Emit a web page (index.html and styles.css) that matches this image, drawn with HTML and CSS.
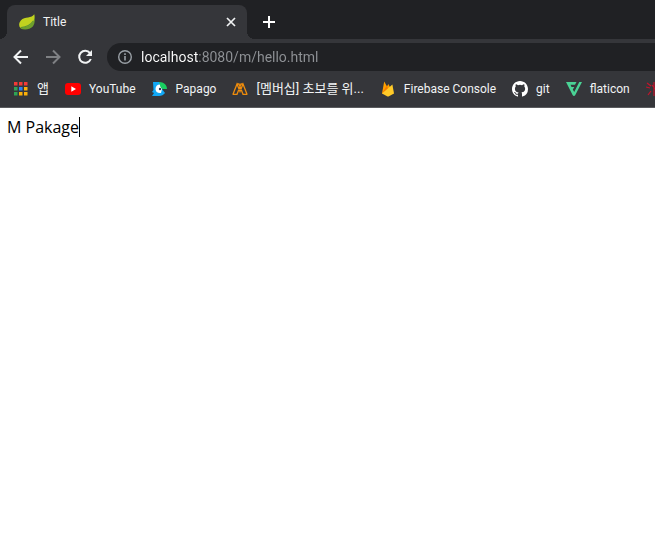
FILE: index.html
```html
<!DOCTYPE html>
<html lang="ko">
<head>
  <meta charset="utf-8">
  <title>Title</title>
  <link rel="stylesheet" href="styles.css">
</head>
<body>
  <header class="browser">
    <div class="tab-strip">
      <div class="tab">
        <svg class="icon" viewBox="0 0 16 16">
          <path fill="#6f9f2c" d="M15.2 0.5C16 5 16.2 9.5 13.8 12.5C11 15.8 5.500 16 1.500 14.800C4 10 10 10 15.200 0.500Z"/>
          <path fill="#c1d21f" d="M15.200 0.300C13 4.500 5.500 2.500 2 6.200C-0.500 9-0.200 12.200 1.200 13.800C6 13.500 11.500 12 14.200 7.500C15.500 5.200 15.700 2.500 15.200 0.300Z"/>
          <path fill="none" stroke="#5f9532" stroke-width="1.100" d="M2 13.600C7 13 11.500 11.200 14.200 7"/>
        </svg>
        <span class="tab-title">Title</span>
        <button class="tab-close" aria-label="Close tab">
          <svg viewBox="0 0 10 10" width="10" height="10"><path d="M1 1L9 9M9 1L1 9" stroke="#f1f3f4" stroke-width="1.700"/></svg>
        </button>
      </div>
      <button class="new-tab" aria-label="New tab">
        <svg viewBox="0 0 12 12" width="12" height="12"><path d="M6 0V12M0 6H12" stroke="#fff" stroke-width="2"/></svg>
      </button>
    </div>

    <div class="toolbar">
      <button class="nav" aria-label="Back">
        <svg viewBox="0 0 16 16"><path d="M15 8H2M8 1.500L1.500 8L8 14.500" fill="none" stroke="#f1f3f4" stroke-width="2"/></svg>
      </button>
      <button class="nav" aria-label="Forward">
        <svg viewBox="0 0 16 16"><path d="M1 8H14M8 1.500L14.500 8L8 14.500" fill="none" stroke="#7f8184" stroke-width="2"/></svg>
      </button>
      <button class="nav" aria-label="Reload">
        <svg viewBox="0 0 16 16"><path d="M13 4.200A6 6 0 1 0 13.800 10" fill="none" stroke="#f1f3f4" stroke-width="2"/><path d="M15 1V7H9Z" fill="#f1f3f4"/></svg>
      </button>
      <label class="address">
        <svg viewBox="0 0 16 16" width="16" height="16"><circle cx="8" cy="8" r="6.300" fill="none" stroke="#9aa0a6" stroke-width="1.400"/><path d="M8 7V11.500M8 4.300V5.900" stroke="#9aa0a6" stroke-width="1.600"/></svg>
        <input class="url" type="text" aria-label="Address" value="localhost:8080/m/hello.html" spellcheck="false">
      </label>
    </div>

    <nav class="bookmarks">
      <a class="bookmark hangul" href="#">
        <svg class="icon" viewBox="0 0 16 16">
          <path fill="#f23b36" d="M1 1h3.500v3.500h-3.500zM6 1h3.500v3.500h-3.500zM11 1h3.500v3.500h-3.500z"/>
          <path fill="#2fa455" d="M1 6h3.500v3.500h-3.500zM1 11h3.500v3.500h-3.500z"/>
          <path fill="#2d83f0" d="M6 6h3.500v3.500h-3.500z"/>
          <path fill="#fbb008" d="M11 6h3.500v3.500h-3.500zM6 11h3.500v3.500h-3.500zM11 11h3.500v3.500h-3.500z"/>
        </svg>
        앱
      </a>
      <a class="bookmark" href="#">
        <svg class="icon" viewBox="0 0 16 16"><rect y="2" width="16" height="12" rx="3" fill="#f00"/><path d="M6.300 5.300L11 8L6.300 10.700Z" fill="#fff"/></svg>
        YouTube
      </a>
      <a class="bookmark" href="#">
        <svg class="icon" viewBox="0 0 16 16">
          <path fill="#12a8f5" d="M1 1H8L10 8L13 12C11.500 14 9.500 15 7 15H0L2 12L0 11L1.500 9Z"/>
          <path fill="#fff" d="M8 3.500C5 3.500 3.500 5.500 3.500 8S5.500 12.500 9 12L10 8Z"/>
          <path fill="#19ce60" d="M7 1C12 1 15 4 15 8H10.500C9.500 7.500 8 6 8 4Z"/>
          <circle cx="8" cy="8" r="1.200" fill="#263858"/>
        </svg>
        Papago
      </a>
      <a class="bookmark hangul" href="#">
        <svg class="icon" viewBox="0 0 16 16"><path d="M1 13.300L5 3L8 10.500L11 3L15 13.300M5 3H7L11 13.300M11 3H9L5 13.300M0.500 13.300H5.500M10.500 13.300H15.500" fill="none" stroke="#ee8c0c" stroke-width="1.300"/></svg>
        [멤버십] 초보를 위...
      </a>
      <a class="bookmark" href="#">
        <svg class="icon" viewBox="0 0 16 16">
          <path fill="#ffa000" d="M2 12.500L4.200 0.600L7 5.500L8.300 3L13.500 12.500Z"/>
          <path fill="#f57c00" d="M2 12.500L6.600 4.800L9 9Z"/>
          <path fill="#ffca28" d="M2 12.500L12.400 3.500L14 12.500L8.500 15.600H7.500Z"/>
        </svg>
        Firebase Console
      </a>
      <a class="bookmark" href="#">
        <svg class="icon" viewBox="0 0 16 16"><path fill="#fff" d="M8 0C3.580 0 0 3.580 0 8c0 3.540 2.290 6.530 5.470 7.590.4.070.55-.17.55-.38 0-.19-.01-.82-.01-1.490-2.010.37-2.530-.49-2.690-.94-.09-.23-.48-.94-.82-1.130-.28-.15-.68-.52-.01-.53.63-.01 1.080.58 1.230.82.72 1.210 1.870.87 2.330.66.07-.52.28-.87.51-1.070-1.780-.2-3.640-.89-3.640-3.950 0-.87.31-1.590.82-2.150-.08-.2-.36-1.020.08-2.120 0 0 .67-.21 2.200.82a7.600 7.600 0 0 1 4 0c1.530-1.040 2.200-.82 2.200-.82.44 1.100.16 1.920.08 2.120.51.56.82 1.270.82 2.150 0 3.070-1.870 3.750-3.650 3.950.29.25.54.73.54 1.480 0 1.070-.01 1.930-.01 2.200 0 .21.15.46.55.38A8 8 0 0 0 16 8c0-4.420-3.580-8-8-8Z"/></svg>
        git
      </a>
      <a class="bookmark" href="#">
        <svg class="icon" viewBox="0 0 16 16">
          <path fill="#4ad295" d="M0 1H10.500L9 3.800H4.500L5.500 6H8.300L6.800 8.600L8.200 11L13.300 1H16L9.300 14C8.700 15.300 7.300 15.300 6.600 14Z"/>
        </svg>
        flaticon
      </a>
      <a class="bookmark" href="#" aria-label="More">
        <svg class="icon" viewBox="0 0 16 16"><path d="M1 2L5 5M0 6L4 7M2 14L5 10M8 1V15M6 4L14 14" fill="none" stroke="#c4142b" stroke-width="1.200"/></svg>
      </a>
    </nav>
  </header>

  <main class="page">
    <p class="text">M Pakage<span class="caret"></span></p>
  </main>
</body>
</html>
```
FILE: styles.css
```css
* {
  box-sizing: border-box;
}

body {
  margin: 0;
  background-color: #fff;
  font-family: Roboto, "Noto Sans CJK KR", sans-serif;
  font-size: 12px;
  overflow-x: hidden;
}

button {
  display: flex;
  align-items: center;
  justify-content: center;
  padding: 0;
  border: 0;
  background: none;
}

.browser {
  background-color: #35363a;
  border-bottom: 1px solid #5a5b5e;
  overflow: hidden;
}

.icon {
  flex: none;
  width: 16px;
  height: 16px;
}

.tab-strip {
  display: flex;
  align-items: center;
  gap: 12px;
  height: 39px;
  padding: 5px 7px 0;
  background-color: #202124;
}

.tab {
  position: relative;
  display: flex;
  align-items: center;
  gap: 8px;
  width: 240px;
  height: 34px;
  padding: 0 8px 0 12px;
  border-radius: 8px 8px 0 0;
  background-color: #35363a;
  color: #f1f3f4;
}

/* curved feet of the active tab */
.tab::before,
.tab::after {
  content: "";
  position: absolute;
  bottom: 0;
  width: 8px;
  height: 8px;
}

.tab::before {
  right: 100%;
  background: radial-gradient(circle at 0 0, #202124 8px, #35363a 8px);
}

.tab::after {
  left: 100%;
  background: radial-gradient(circle at 100% 0, #202124 8px, #35363a 8px);
}

.tab-title {
  flex: 1;
}

.tab-close {
  width: 16px;
  height: 16px;
}

.new-tab {
  width: 20px;
  height: 20px;
}

.toolbar {
  display: flex;
  align-items: center;
  gap: 16px;
  height: 36px;
  padding-left: 13px;
}

.nav {
  flex: none;
  width: 16px;
  height: 16px;
}

.address {
  display: flex;
  flex: 1;
  align-items: center;
  gap: 8px;
  height: 28px;
  margin-left: -2px;
  padding-left: 10px;
  border-radius: 14px 0 0 14px;
  background-color: #202124;
}

/* host is white, the rest of the address is dimmed */
.url {
  flex: 1;
  min-width: 0;
  padding: 0;
  border: 0;
  outline: 0;
  font-family: inherit;
  font-size: 14px;
  color: transparent;
  background: linear-gradient(to right, #fff 58px, #8f9296 58px);
  background-clip: text;
  -webkit-background-clip: text;
}

.bookmarks {
  display: flex;
  align-items: center;
  gap: 16px;
  height: 32px;
  padding: 0 0 4px 13px;
}

.bookmark {
  display: flex;
  flex: none;
  align-items: center;
  gap: 8px;
  line-height: 16px;
  color: #f1f3f4;
  text-decoration: none;
  white-space: nowrap;
}

.hangul {
  font-size: 13px;
}

.page {
  padding: 8px 7px;
}

.text {
  display: flex;
  align-items: center;
  margin: 0;
  font-family: "Open Sans", sans-serif;
  font-size: 16px;
  line-height: 22px;
  color: #000;
}

.caret {
  width: 1px;
  height: 20px;
  background-color: #000;
}
```
